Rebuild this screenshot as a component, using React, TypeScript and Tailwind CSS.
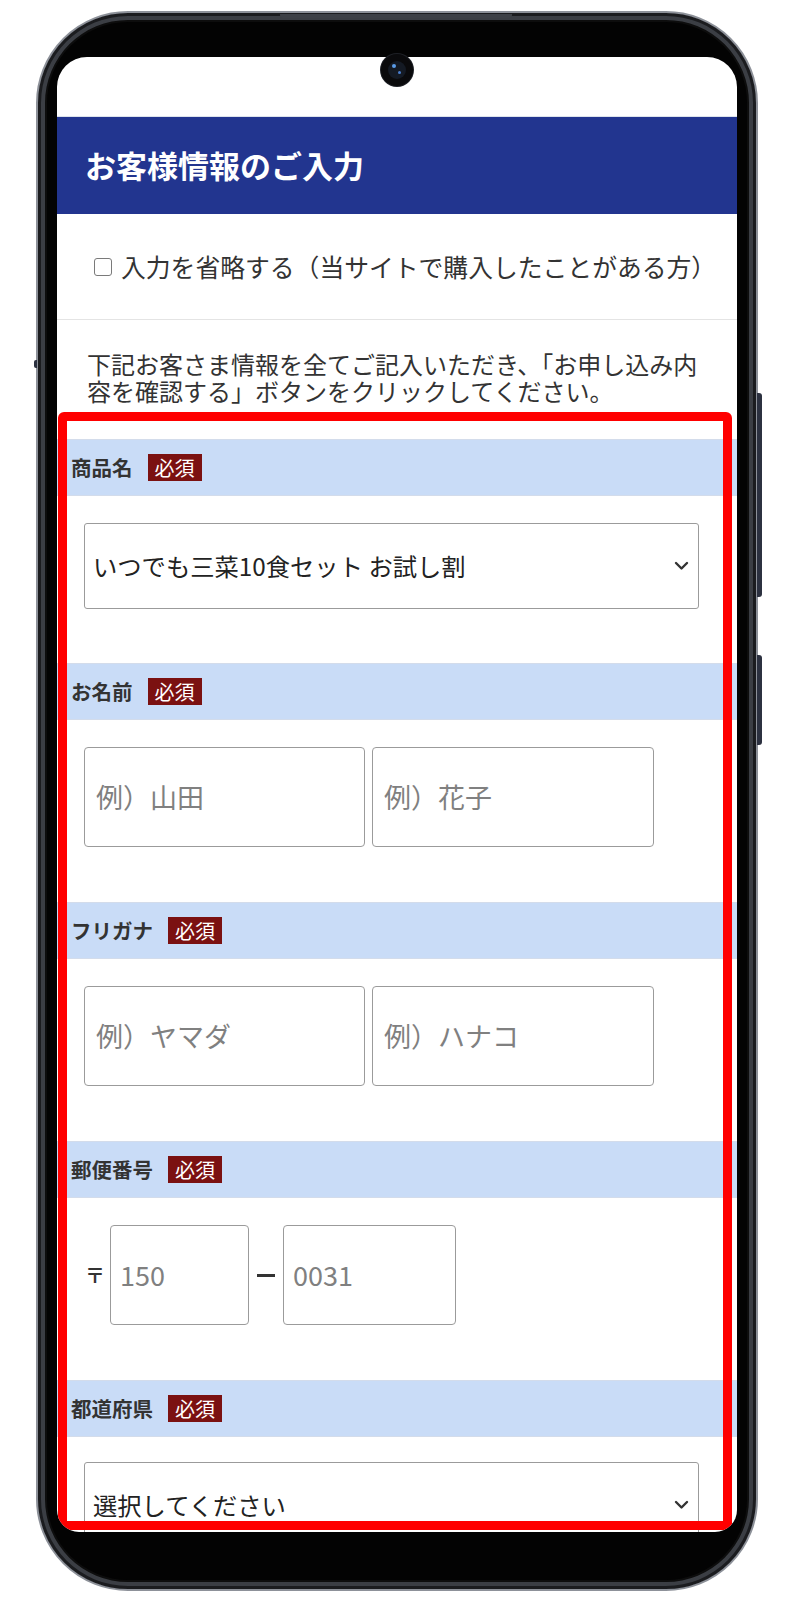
import React from "react";

function Chevron() {
  return (
    <svg width="15" height="10" viewBox="0 0 15 10" fill="none">
      <path d="M2 2 L7.5 7.5 L13 2" stroke="#333" strokeWidth="2.4" strokeLinecap="round" strokeLinejoin="round" />
    </svg>
  );
}

function SectionBar({ label }: { label: string }) {
  return (
    <div className="flex h-[57px] items-center border-y border-[#d3dceb] bg-[#c9dcf7] pl-[14px]">
      <span className="text-[20.5px] font-bold leading-none text-[#333]">{label}</span>
      <span className="ml-[15px] bg-[#7b1111] px-[7px] text-[20px] leading-[27px] text-white">必須</span>
    </div>
  );
}

function SelectBox({ text }: { text: string }) {
  return (
    <div className="ml-[27px] flex h-[86px] w-[615px] items-center justify-between rounded-[3px] border border-[#9b9b9b] pl-[8px] pr-[9px]">
      <span className="text-[24.3px] text-[#222]">{text}</span>
      <Chevron />
    </div>
  );
}

function TextBox({ placeholder, width }: { placeholder: string; width: string }) {
  return (
    <div className={`flex h-[100px] items-center rounded-[4px] border border-[#9b9b9b] pl-[11px] text-[27px] text-[#808080] ${width}`}>
      {placeholder}
    </div>
  );
}

function NamePair({ first, last }: { first: string; last: string }) {
  return (
    <div className="ml-[27px] flex gap-[7px]">
      <TextBox placeholder={first} width="w-[281px]" />
      <TextBox placeholder={last} width="w-[282px]" />
    </div>
  );
}

function Screen() {
  return (
    <div className="relative h-[1475px] w-[680px] overflow-hidden rounded-t-[30px] rounded-b-[22px] bg-white">
      <div className="h-[60px] border-b border-[#dde3ec]" />
      <div className="flex h-[97px] items-center bg-[#22358f] pl-[28px] text-[31px] font-bold text-white">
        お客様情報のご入力
      </div>

      <div className="flex h-[106px] items-center border-b border-[#e4e4e4] pl-[37px]">
        <span className="h-[18px] w-[18px] shrink-0 rounded-[3px] border border-[#7a7a7a] bg-white" />
        <span className="ml-[9px] whitespace-nowrap text-[24.8px] text-[#333]">入力を省略する（当サイトで購入したことがある方）</span>
      </div>

      <p className="w-[656px] pl-[30px] pt-[30px] text-[24px] leading-[27px] text-[#333]">
        下記お客さま情報を全てご記入いただき、「お申し込み内容を確認する」ボタンをクリックしてください。
      </p>

      <div className="mt-[35px]">
        <SectionBar label="商品名" />
        <div className="pb-[54px] pt-[27px]">
          <SelectBox text="いつでも三菜10食セット お試し割" />
        </div>

        <SectionBar label="お名前" />
        <div className="pb-[55px] pt-[27px]">
          <NamePair first="例）山田" last="例）花子" />
        </div>

        <SectionBar label="フリガナ" />
        <div className="pb-[55px] pt-[27px]">
          <NamePair first="例）ヤマダ" last="例）ハナコ" />
        </div>

        <SectionBar label="郵便番号" />
        <div className="pb-[55px] pt-[27px]">
          <div className="ml-[26px] flex items-center">
            <span className="w-[24px] text-center text-[20px] font-bold text-[#333]">〒</span>
            <div className="ml-[3px] flex h-[100px] w-[139px] items-center rounded-[4px] border border-[#9b9b9b] pl-[9px] text-[27px] text-[#808080]">
              150
            </div>
            <span className="mx-[8px] h-[3px] w-[18px] bg-[#333]" />
            <div className="flex h-[100px] w-[173px] items-center rounded-[4px] border border-[#9b9b9b] pl-[9px] text-[27px] text-[#808080]">
              0031
            </div>
          </div>
        </div>

        <SectionBar label="都道府県" />
        <div className="pt-[25px]">
          <SelectBox text="選択してください" />
        </div>
      </div>

      {/* highlight frame around the form fields */}
      <div className="pointer-events-none absolute left-[1px] top-[355px] h-[1118px] w-[674px] rounded-[6px] border-[9px] border-[#ff0000]" />
    </div>
  );
}

export default function App() {
  return (
    <div className="h-[1600px] w-[800px] bg-white pl-[36px] pt-[11px] font-['Noto_Sans_CJK_JP','Noto_Sans',sans-serif]">
      <div className="relative h-[1580px] w-[722px] rounded-[92px] border-2 border-[#8d9199] bg-[#030303] pb-[57px] pl-[19px] pr-[19px] pt-[44px] shadow-[inset_0_0_0_3px_#1b1c1f,inset_0_0_0_7px_#3b3e44,inset_0_0_0_9px_#0d0d0d]">
        {/* earpiece slot */}
        <div className="absolute left-[242px] top-[1px] h-[4px] w-[232px] rounded-b-[3px] bg-[#3d4046]" />
        {/* side keys */}
        <div className="absolute -right-[6px] top-[380px] h-[204px] w-[5px] rounded-r-[3px] bg-[#2c3140]" />
        <div className="absolute -right-[6px] top-[642px] h-[90px] w-[5px] rounded-r-[3px] bg-[#2c3140]" />
        <div className="absolute -left-[4px] top-[347px] h-[8px] w-[3px] rounded-l-[2px] bg-[#2c3140]" />

        <Screen />

        {/* front camera */}
        <div className="absolute left-[343px] top-[41px] flex h-[32px] w-[32px] items-center justify-center rounded-full bg-[#0a0a0c] shadow-[0_0_0_1px_#1e2026]">
          <div className="relative h-[18px] w-[18px] rounded-full bg-[#141a24]">
            <span className="absolute left-[4px] top-[3px] h-[4px] w-[4px] rounded-full bg-[#5a9be8]" />
            <span className="absolute left-[10px] top-[10px] h-[3px] w-[3px] rounded-full bg-[#4a7fd0]" />
          </div>
        </div>
      </div>
    </div>
  );
}
